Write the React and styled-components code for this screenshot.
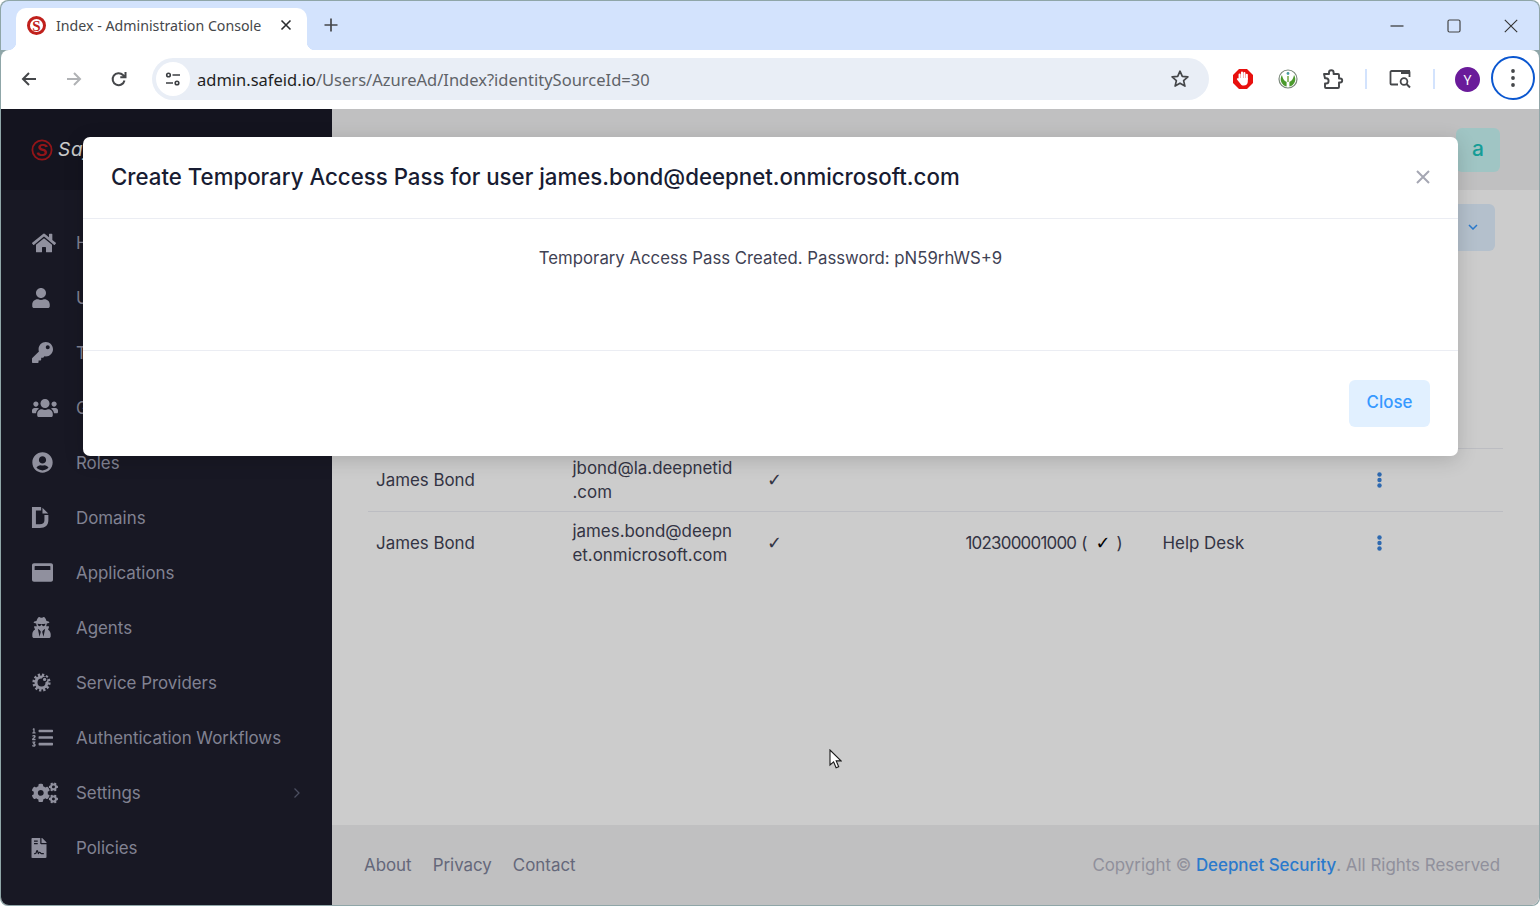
import React from 'react'
import styled, { createGlobalStyle } from 'styled-components'
import {
  FaHome, FaUser, FaKey, FaUsers, FaUserCircle, FaDochub, FaWindowMaximize,
  FaUserSecret, FaListOl, FaCogs, FaFileContract,
} from 'react-icons/fa'

const GlobalStyle = createGlobalStyle`
  html, body { margin: 0; padding: 0; height: 100%; overflow: hidden; background: #fff; }
  * { box-sizing: border-box; }
  body { font-family: Inter, "Open Sans", sans-serif; }
`

const Frame = styled.div`
  width: 1540px;
  height: 906px;
  display: flex;
  flex-direction: column;
  padding: 1px;
  background: #8fa6a8;
  border-radius: 8px;
  overflow: hidden;
`

const TabStrip = styled.div`
  height: 49px;
  flex: none;
  background: #d3e3fd;
  display: flex;
  align-items: flex-end;
  padding-left: 15px;
  border-radius: 8px 8px 0 0;
`

const Tab = styled.div`
  position: relative;
  width: 291px;
  height: 42px;
  background: #fff;
  border-radius: 10px 10px 0 0;
  display: flex;
  align-items: center;
  padding: 0 15px 8px 11px;
  color: #45474a;
  font-family: "Noto Sans", sans-serif;
  font-size: 14.2px;

  &::before, &::after {
    content: '';
    position: absolute;
    bottom: 0;
    width: 8px;
    height: 8px;
  }
  &::before { left: -8px; background: radial-gradient(circle at 0 0, transparent 8px, #fff 8.5px); }
  &::after { right: -8px; background: radial-gradient(circle at 100% 0, transparent 8px, #fff 8.5px); }
`

const TabTitle = styled.span`
  flex: 1;
  margin-left: 10px;
  white-space: nowrap;
`

const NewTab = styled.div`
  width: 40px;
  height: 42px;
  display: flex;
  align-items: center;
  justify-content: center;
  padding-bottom: 8px;
  margin-left: 4px;
`

const WindowControls = styled.div`
  margin-left: auto;
  height: 49px;
  display: flex;
  align-items: center;
  padding-top: 1px;
`

const WindowButton = styled.div`
  width: 57px;
  display: flex;
  justify-content: center;
`

const Toolbar = styled.div`
  height: 59px;
  flex: none;
  background: #fff;
  display: flex;
  align-items: center;
  border-radius: 8px 8px 0 0;
  padding: 0 0 1px 5px;
`

const NavButton = styled.div`
  width: 45px;
  display: flex;
  justify-content: center;
  color: ${({ $muted }) => ($muted ? '#b0b2b5' : '#45474a')};
`

const Omnibox = styled.div`
  width: 1057px;
  height: 42px;
  margin-left: 11px;
  border-radius: 21px;
  background: #e9eef6;
  display: flex;
  align-items: center;
  padding: 0 19px 0 4px;
`

const SiteInfo = styled.div`
  width: 34px;
  height: 34px;
  border-radius: 50%;
  background: #fff;
  display: flex;
  align-items: center;
  justify-content: center;
  flex: none;
`

const Url = styled.div`
  flex: 1;
  margin-left: 7px;
  font-family: "Noto Sans", sans-serif;
  font-size: 16.5px;
  color: #5f6368;
  white-space: nowrap;
  b { font-weight: 400; color: #1f1f1f; }
`

const ToolIcons = styled.div`
  display: flex;
  align-items: center;
  margin-left: 11px;
  flex: 1;
`

const ToolIcon = styled.div`
  width: ${({ $w }) => $w || 45}px;
  display: flex;
  justify-content: center;
  align-items: center;
  flex: none;
`

const ToolDivider = styled.div`
  width: 2px;
  height: 20px;
  flex: none;
  background: #d3e3fd;
  margin-left: ${({ $gap }) => $gap || 0}px;
`

const Avatar = styled.div`
  width: 25px;
  height: 25px;
  border-radius: 50%;
  background: #6a1b9a;
  color: #fff;
  font-family: "Noto Sans", sans-serif;
  font-size: 14px;
  display: flex;
  align-items: center;
  justify-content: center;
`

const MenuRing = styled.div`
  width: 44px;
  height: 44px;
  margin: -2px 0 0 -9px;
  border-radius: 50%;
  border: 2px solid #0b57d0;
  display: flex;
  align-items: center;
  justify-content: center;
  flex: none;
`

const Page = styled.div`
  position: relative;
  flex: 1;
  min-height: 0;
  display: flex;
  background: #fff;
  overflow: hidden;
  border-radius: 0 0 8px 8px;
`

const Sidebar = styled.aside`
  width: 331px;
  flex: none;
  background: #1e1e2d;
  display: flex;
  flex-direction: column;
`

const Brand = styled.div`
  height: 81px;
  flex: none;
  background: #1a1a27;
  display: flex;
  align-items: center;
  padding-left: 30px;
  gap: 5px;
`

const BrandName = styled.span`
  color: #fff;
  font-style: italic;
  font-size: 19px;
  letter-spacing: .8px;
`

const NavList = styled.nav`
  display: flex;
  flex-direction: column;
  padding-top: 25px;
`

const NavItem = styled.div`
  height: 55px;
  display: flex;
  align-items: center;
  padding: 0 31px 0 31px;
  color: #a2a3b7;
  font-size: 16.9px;
`

const NavIcon = styled.span`
  width: 44px;
  flex: none;
  display: flex;
  align-items: center;
  color: #b4b5c6;
  font-size: ${({ $size }) => $size || 21}px;
  svg { margin-left: ${({ $shift }) => $shift || 0}px; }
`

const NavLabel = styled.span`
  flex: 1;
  white-space: nowrap;
`

const Main = styled.main`
  flex: 1;
  min-width: 0;
  display: flex;
  flex-direction: column;
`

const TopBar = styled.header`
  height: 81px;
  flex: none;
  background: #f0f0f2;
  display: flex;
  justify-content: flex-end;
  align-items: center;
  padding-right: 39px;
`

const UserBadge = styled.div`
  width: 44px;
  height: 44px;
  border-radius: 6px;
  background: #c9f7f5;
  color: #1bc5bd;
  font-size: 21px;
  font-weight: 500;
  display: flex;
  align-items: center;
  justify-content: center;
  padding-bottom: 2px;
`

const Content = styled.section`
  flex: 1;
  min-height: 0;
  padding: 15px 36px 0 36px;
  display: flex;
  flex-direction: column;
`

const ActionRow = styled.div`
  display: flex;
  justify-content: flex-end;
  padding-right: 8px;
  height: 243px;
  flex: none;
`

const DropButton = styled.div`
  width: 80px;
  height: 47px;
  margin-top: -1px;
  border-radius: 6px;
  background: #e1f0ff;
  color: #3699ff;
  display: flex;
  align-items: center;
  justify-content: flex-end;
  padding: 0 17px 2px 0;
`

const Row = styled.div`
  display: grid;
  grid-template-columns: 196.5px 196.5px 196.5px 197px 197px 1fr;
  align-items: center;
  height: 63px;
  border-top: 1px solid #ebedf3;
  color: #3f4254;
  font-size: 16.9px;
  line-height: 24px;
`

const Cell = styled.div`
  padding-left: 8px;
  white-space: nowrap;
`

const MailCell = styled.div`
  padding-left: 8px;
  width: 171px;
  word-break: break-all;
`

const Tick = styled.span`
  font-family: "DejaVu Sans", sans-serif;
  font-size: 18px;
  font-weight: 700;
  color: ${({ $dark }) => ($dark ? '#000' : 'inherit')};
  margin: 0 ${({ $gap }) => $gap || 0}px 0 ${({ $gap }) => $gap ? $gap + 2 : -2}px;
`

const IdNumber = styled.span`
  letter-spacing: -.75px;
  margin-right: 5px;
`

const Dots = styled.div`
  padding-left: 25px;
  color: #3a84dc;
  display: flex;
`

const Footer = styled.footer`
  height: 80px;
  flex: none;
  margin-top: auto;
  background: #f0f0f2;
  display: flex;
  align-items: center;
  justify-content: space-between;
  padding: 0 39px 0 32px;
  font-size: 16.9px;
  color: #b5b5c3;
`

const FooterLinks = styled.div`
  display: flex;
  gap: 21px;
  color: #7e8299;
`

const Copyright = styled.div`
  a { color: #3699ff; font-weight: 500; }
`

const Backdrop = styled.div`
  position: absolute;
  inset: 0;
  background: rgba(0, 0, 0, .2);
`

const Modal = styled.div`
  position: absolute;
  left: 82px;
  top: 28px;
  width: 1375px;
  height: 319px;
  background: #fff;
  border-radius: 7px;
  box-shadow: 0 4px 20px rgba(0, 0, 0, .16);
  display: flex;
  flex-direction: column;
`

const ModalHeader = styled.div`
  height: 82px;
  flex: none;
  border-bottom: 1px solid #ebedf3;
  display: flex;
  align-items: center;
  justify-content: space-between;
  padding: 0 28px 2px 28px;
`

const ModalTitle = styled.h5`
  margin: 0;
  font-size: 22.25px;
  font-weight: 500;
  color: #181c32;
`

const ModalBody = styled.div`
  height: 132px;
  flex: none;
  padding-top: 29px;
  text-align: center;
  font-size: 16.75px;
  color: #3f4254;
  border-bottom: 1px solid #ebedf3;
`

const ModalFooter = styled.div`
  flex: 1;
  display: flex;
  align-items: center;
  justify-content: flex-end;
  padding-right: 28px;
`

const CloseButton = styled.button`
  width: 81px;
  height: 47px;
  border: 0;
  border-radius: 6px;
  padding: 0 0 3px;
  background: #e1f0ff;
  color: #3699ff;
  font: 500 16.9px Inter, sans-serif;
`

const Pointer = styled.svg`
  position: absolute;
  left: 828px;
  top: 640px;
`

const navItems = [
  { label: 'Home', Icon: FaHome, size: 24 },
  { label: 'Users', Icon: FaUser, size: 20, shift: -1 },
  { label: 'Tokens', Icon: FaKey, size: 21 },
  { label: 'Groups', Icon: FaUsers, size: 26 },
  { label: 'Roles', Icon: FaUserCircle, size: 21 },
  { label: 'Domains', Icon: FaDochub, size: 21, shift: -2 },
  { label: 'Applications', Icon: FaWindowMaximize, size: 21 },
  { label: 'Agents', Icon: FaUserSecret, size: 21, shift: -1 },
  { label: 'Service Providers', Icon: ProviderGear, size: 19 },
  { label: 'Authentication Workflows', Icon: FaListOl, size: 21 },
  { label: 'Settings', Icon: FaCogs, size: 26 },
  { label: 'Policies', Icon: FaFileContract, size: 20, shift: -3 },
]

const stroke = { fill: 'none', stroke: 'currentColor', strokeWidth: 2 }

// gear with the little notch at upper right, not in the icon packs
function ProviderGear() {
  return (
    <svg width="19" height="19" viewBox="0 0 19 19">
      <circle cx="9.5" cy="9.5" r="7.6" fill="none" stroke="currentColor" strokeWidth="3" strokeDasharray="2.2 1.8" />
      <circle cx="9.5" cy="9.5" r="7" fill="currentColor" />
      <circle cx="9.5" cy="9.5" r="4" fill="#1e1e2d" />
      <circle cx="12.6" cy="6.4" r="2.7" fill="#1e1e2d" />
      <circle cx="12.6" cy="6.4" r="1.6" fill="currentColor" />
    </svg>
  )
}

function RowDots() {
  return (
    <Dots>
      <svg width="5" height="16" viewBox="0 0 5 16" fill="currentColor">
        <circle cx="2.5" cy="2.5" r="2.2" /><circle cx="2.5" cy="8" r="2.2" /><circle cx="2.5" cy="13.5" r="2.2" />
      </svg>
    </Dots>
  )
}

export default function App() {
  return (
    <>
      <GlobalStyle />
      <Frame>
        <TabStrip>
          <Tab>
            <svg width="19" height="19" viewBox="0 0 19 19">
              <circle cx="9.5" cy="9.5" r="8" fill="#fff" stroke="#c0201c" strokeWidth="3" />
              <text x="9.5" y="14.5" textAnchor="middle" fontSize="15" fontWeight="700" fill="#c0201c" fontFamily="Liberation Serif, serif">S</text>
            </svg>
            <TabTitle>Index - Administration Console</TabTitle>
            <svg width="12" height="12" viewBox="0 0 12 12"><path d="M1.5 1.5l9 9M10.5 1.5l-9 9" stroke="#2b2d30" strokeWidth="1.6" /></svg>
          </Tab>
          <NewTab>
            <svg width="14" height="14" viewBox="0 0 14 14"><path d="M7 0.5v13M0.5 7h13" stroke="#45474a" strokeWidth="1.7" /></svg>
          </NewTab>
          <WindowControls>
            <WindowButton><svg width="14" height="14" viewBox="0 0 14 14"><path d="M0.5 7h13" stroke="#333" strokeWidth="1.2" /></svg></WindowButton>
            <WindowButton><svg width="14" height="14" viewBox="0 0 14 14"><rect x="1" y="1" width="12" height="12" rx="1.5" fill="none" stroke="#444" strokeWidth="1.2" /></svg></WindowButton>
            <WindowButton><svg width="14" height="14" viewBox="0 0 14 14"><path d="M0.8 0.8l12.4 12.4M13.2 0.8L0.8 13.2" stroke="#333" strokeWidth="1.1" /></svg></WindowButton>
          </WindowControls>
        </TabStrip>
        <Toolbar>
          <NavButton>
            <svg width="18" height="18" viewBox="0 0 18 18"><path d="M16 9H3M9 3L3 9l6 6" {...stroke} /></svg>
          </NavButton>
          <NavButton $muted>
            <svg width="18" height="18" viewBox="0 0 18 18"><path d="M2 9h13M9 3l6 6-6 6" {...stroke} /></svg>
          </NavButton>
          <NavButton>
            <svg width="18" height="18" viewBox="0 0 18 18"><path d="M14.5 10.5A6 6 0 1 1 13 5l2 2M15.5 2v5.2h-5.2" {...stroke} /></svg>
          </NavButton>
          <Omnibox>
            <SiteInfo>
              <svg width="16" height="16" viewBox="0 0 16 16" fill="none" stroke="#3c3f43" strokeWidth="1.6">
                <circle cx="3.5" cy="4" r="1.8" /><path d="M7.5 4h7.5M1 12h7" /><circle cx="12" cy="12" r="1.8" />
              </svg>
            </SiteInfo>
            <Url><b>admin.safeid.io</b>/Users/AzureAd/Index?identitySourceId=30</Url>
            <svg width="20" height="20" viewBox="0 0 20 20"><path d="M10 2.2l2.3 5.2 5.6.5-4.3 3.7 1.3 5.5L10 14.2l-4.9 2.9 1.3-5.5-4.3-3.7 5.6-.5z" fill="none" stroke="#45474a" strokeWidth="1.7" strokeLinejoin="round" /></svg>
          </Omnibox>
          <ToolIcons>
            <ToolIcon>
              <svg width="22" height="22" viewBox="0 0 22 22">
                <path d="M7 1h8l6 6v8l-6 6H7l-6-6V7z" fill="#e8100e" />
                <path d="M7.6 11V6.5M10 11V4.6M12.4 11V5M14.8 11V6.8" stroke="#fff" strokeWidth="2.1" strokeLinecap="round" />
                <path d="M6.6 10h9.2v3.5c0 2.4-1.6 4-4 4-2 0-3-1-4-2.6L5 11.6c-.6-1 .9-1.9 1.6-.9z" fill="#fff" />
              </svg>
            </ToolIcon>
            <ToolIcon>
              <svg width="20" height="20" viewBox="0 0 20 20">
                <circle cx="10" cy="10" r="9" fill="#fff" stroke="#7c8a7c" strokeWidth="1.2" />
                <path d="M4 6c1 5 3 6 4.6 7v4.5A7.5 7.5 0 0 1 4 6zM16 6c-1 5-3 6-4.6 7v4.5A7.5 7.5 0 0 0 16 6z" fill="#4b9a2c" />
                <circle cx="10" cy="4.5" r="1.4" fill="#4a9ba0" />
                <rect x="9.2" y="7" width="1.6" height="6" fill="#7cae50" />
              </svg>
            </ToolIcon>
            <ToolIcon>
              <svg width="22" height="22" viewBox="0 0 22 22"><path d="M2 6h5V4.5a2.3 2.3 0 0 1 4.6 0V6H16a1 1 0 0 1 1 1v3.5h1.2a2 2 0 0 1 0 4H17V19a1 1 0 0 1-1 1H4a1 1 0 0 1-1-1v-3.5h1a2.6 2.6 0 0 0 0-5.2H3z" fill="none" stroke="#45474a" strokeWidth="1.9" strokeLinejoin="round" /></svg>
            </ToolIcon>
            <ToolDivider $gap={10} />
            <ToolIcon $w={66}>
              <svg width="23" height="20" viewBox="0 0 23 20">
                <path d="M9 15.5H2.5a1 1 0 0 1-1-1V3a1 1 0 0 1 1-1h17a1 1 0 0 1 1 1v5" fill="none" stroke="#45474a" strokeWidth="1.8" />
                <rect x="12" y="1" width="9" height="4" fill="#45474a" />
                <circle cx="15" cy="12.5" r="3.4" fill="none" stroke="#45474a" strokeWidth="1.8" />
                <path d="M17.5 15l3.5 3.5" stroke="#45474a" strokeWidth="2" />
              </svg>
            </ToolIcon>
            <ToolDivider />
            <ToolIcon $w={65}><Avatar>Y</Avatar></ToolIcon>
            <MenuRing>
              <svg width="4" height="18" viewBox="0 0 4 18" fill="#45474a"><circle cx="2" cy="2" r="1.9" /><circle cx="2" cy="9" r="1.9" /><circle cx="2" cy="16" r="1.9" /></svg>
            </MenuRing>
          </ToolIcons>
        </Toolbar>
        <Page>
          <Sidebar>
            <Brand>
              <svg width="22" height="22" viewBox="0 0 22 22">
                <circle cx="11" cy="11" r="9.6" fill="none" stroke="#b81a1e" strokeWidth="1.8" />
                <text x="11" y="17" textAnchor="middle" fontSize="17" fontWeight="900" fontStyle="italic" fill="#b81a1e" fontFamily="Liberation Sans, sans-serif">S</text>
              </svg>
              <BrandName>SafeID</BrandName>
            </Brand>
            <NavList>
              {navItems.map(({ label, Icon, size, shift }) => (
                <NavItem key={label}>
                  <NavIcon $size={size} $shift={shift}><Icon /></NavIcon>
                  <NavLabel>{label}</NavLabel>
                  {label === 'Settings' && (
                    <svg width="8" height="12" viewBox="0 0 8 12"><path d="M1.5 1.5L6 6l-4.5 4.5" fill="none" stroke="#5e6278" strokeWidth="1.3" /></svg>
                  )}
                </NavItem>
              ))}
            </NavList>
          </Sidebar>
          <Main>
            <TopBar><UserBadge>a</UserBadge></TopBar>
            <Content>
              <ActionRow>
                <DropButton>
                  <svg width="10" height="6" viewBox="0 0 10 6"><path d="M1 1l4 4 4-4" fill="none" stroke="currentColor" strokeWidth="1.5" /></svg>
                </DropButton>
              </ActionRow>
              <Row>
                <Cell>James Bond</Cell>
                <MailCell>jbond@la.deepnetid<wbr />.com</MailCell>
                <Cell><Tick>✓</Tick></Cell>
                <Cell />
                <Cell />
                <RowDots />
              </Row>
              <Row>
                <Cell>James Bond</Cell>
                <MailCell>james.bond@deepnet.onmicrosoft.com</MailCell>
                <Cell><Tick>✓</Tick></Cell>
                <Cell><IdNumber>102300001000</IdNumber>(<Tick $dark $gap={6}>✓</Tick>)</Cell>
                <Cell>Help Desk</Cell>
                <RowDots />
              </Row>
            </Content>
            <Footer>
              <FooterLinks><span>About</span><span>Privacy</span><span>Contact</span></FooterLinks>
              <Copyright>Copyright © <a>Deepnet Security</a>. All Rights Reserved</Copyright>
            </Footer>
          </Main>
          <Backdrop />
          <Modal>
            <ModalHeader>
              <ModalTitle>Create Temporary Access Pass for user james.bond@deepnet.onmicrosoft.com</ModalTitle>
              <svg width="14" height="14" viewBox="0 0 14 14"><path d="M1 1l12 12M13 1L1 13" stroke="#a5a7b3" strokeWidth="2" /></svg>
            </ModalHeader>
            <ModalBody>Temporary Access Pass Created. Password: pN59rhWS+9</ModalBody>
            <ModalFooter><CloseButton>Close</CloseButton></ModalFooter>
          </Modal>
          <Pointer width="13" height="20" viewBox="0 0 13 20">
            <path d="M1 1v15l3.6-3.2 2.5 6 2.6-1.1-2.5-5.8H12z" fill="#fff" stroke="#1a1a1a" strokeWidth="1.1" />
          </Pointer>
        </Page>
      </Frame>
    </>
  )
}
